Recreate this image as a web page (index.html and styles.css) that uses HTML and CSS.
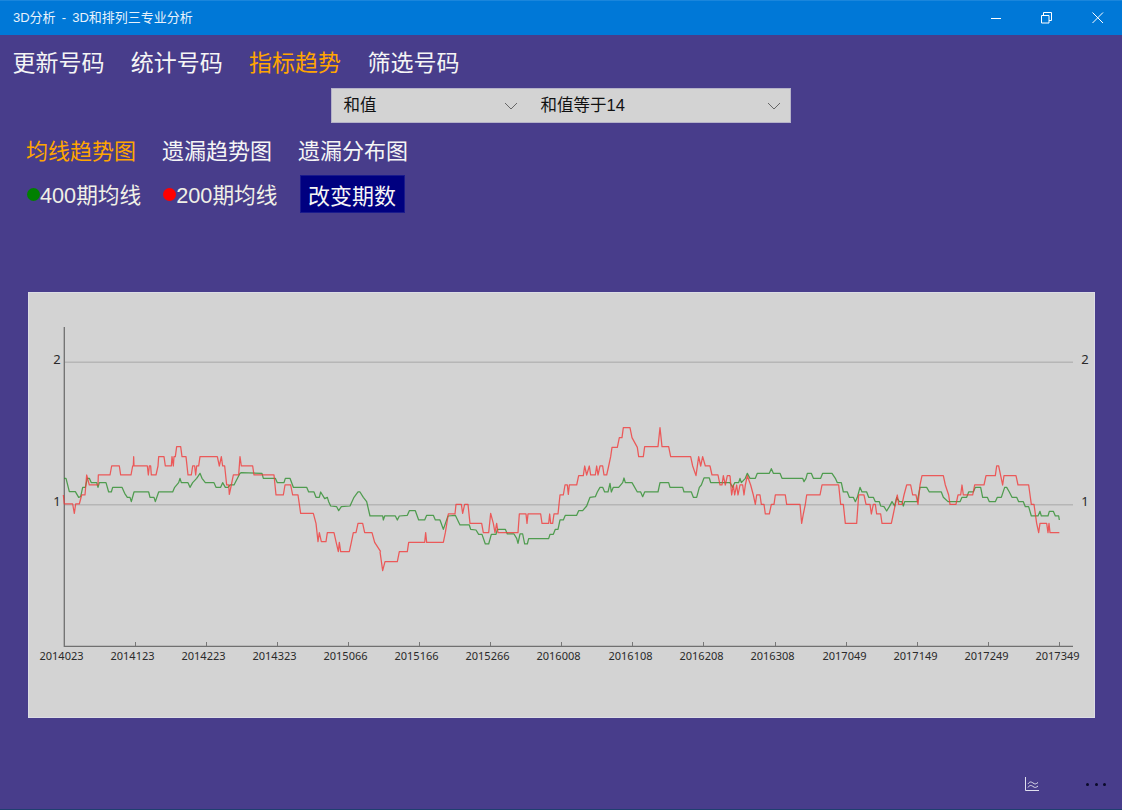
FILE: index.html
```html
<!DOCTYPE html>
<html lang="zh-CN">
<head>
<meta charset="utf-8">
<title>3D分析 - 3D和排列三专业分析</title>
<link rel="stylesheet" href="styles.css">
</head>
<body>
<div class="app">
  <header class="titlebar">
    <span class="title">3D分析 - 3D和排列三专业分析</span>
    <div class="winbtns">
      <svg class="winbtn" width="46" height="35" viewBox="0 0 46 35"><path d="M14 18.500h10" /></svg>
      <svg class="winbtn" width="46" height="35" viewBox="0 0 46 35"><path d="M15.500 15.500h7.500v7.500h-7.500zM17.500 15.500v-3h8v8h-2.500" /></svg>
      <svg class="winbtn" width="46" height="35" viewBox="0 0 46 35"><path d="M17.500 12.500l10.500 10.500M28 12.500l-10.500 10.500" /></svg>
    </div>
  </header>
  <nav class="nav">
    <span>更新号码</span><span>统计号码</span><span class="active">指标趋势</span><span>筛选号码</span>
  </nav>
  <div class="selects">
    <div class="select first"><span>和值</span>
      <svg class="chev" width="14" height="8" viewBox="0 0 14 8"><path d="M1 1l6 6 6-6" /></svg>
    </div>
    <div class="select second"><span>和值等于14</span>
      <svg class="chev" width="14" height="8" viewBox="0 0 14 8"><path d="M1 1l6 6 6-6" /></svg>
    </div>
  </div>
  <div class="subnav">
    <span class="active">均线趋势图</span><span>遗漏趋势图</span><span>遗漏分布图</span>
  </div>
  <div class="legend">
    <div class="legend-item"><i class="dot green"></i><span>400期均线</span></div>
    <div class="legend-item"><i class="dot red"></i><span>200期均线</span></div>
    <button class="change">改变期数</button>
  </div>
  <section class="panel">
    <svg class="chart" width="1067" height="426" viewBox="28 292 1067 426">
      <path class="grid" d="M64 362.300H1073M64 504.700H1073" />
      <path class="axis" d="M64.300 327V646.300H1073" />
      <path class="tick" d="M135.500 642v4M206.500 642v4M277.500 642v4M348.500 642v4M419.500 642v4M490.500 642v4M561.500 642v4M632.500 642v4M703.500 642v4M775.500 642v4M846.500 642v4M917.500 642v4M988.500 642v4M1059.500 642v4" />
      <g class="ylabels">
        <text x="57" y="364">2</text><text x="57" y="506">1</text>
        <text x="1085" y="364">2</text><text x="1085" y="506">1</text>
      </g>
      <g class="xlabels">
        <text x="61.500" y="659.500">2014023</text><text x="132.500" y="659.500">2014123</text><text x="203.500" y="659.500">2014223</text>
        <text x="274.500" y="659.500">2014323</text><text x="345.500" y="659.500">2015066</text><text x="416.500" y="659.500">2015166</text>
        <text x="487.500" y="659.500">2015266</text><text x="558.500" y="659.500">2016008</text><text x="630.500" y="659.500">2016108</text>
        <text x="701.500" y="659.500">2016208</text><text x="772.500" y="659.500">2016308</text><text x="844.500" y="659.500">2017049</text>
        <text x="915.500" y="659.500">2017149</text><text x="986.500" y="659.500">2017249</text><text x="1057.500" y="659.500">2017349</text>
      </g>
      <g transform="translate(30 410) scale(.33333)">
        <polyline class="lg" points="102,205 108,205 118,245 136,245 146,262 152,260 158,232 166,232 172,205 178,205 184,218 200,218 204,232 208,218 228,218 236,246 244,246 248,232 276,232 284,250 292,262 300,262 304,275 312,246 356,246 360,262 372,262 376,275 386,246 428,246 434,232 446,218 450,205 454,218 474,218 480,232 488,218 500,205 510,190 516,205 526,218 552,218 558,232 572,232 578,218 586,232 594,232 600,225 612,225 630,190 634,188 696,190 700,205 736,205 742,218 762,218 766,205 780,205 790,232 830,232 836,246 852,246 858,262 868,262 872,246 884,266 892,262 896,275 902,288 920,290 926,302 934,290 960,288 972,262 984,246 990,246 1000,262 1010,275 1020,318 1056,318" />
        <polyline class="lr" points="100,255 103,282 128,282 133,310 137,282 148,282 155,255 165,255 170,195 178,225 204,225 205,195 240,195 245,168 268,168 272,195 303,195 308,168 310,168 311,140 312,168 352,168 355,195 358,168 362,168 364,195 378,195 384,168 386,140 402,140 406,168 424,168 426,140 430,168 432,140 436,140 440,110 452,110 456,140 468,140 474,195 484,195 488,168 494,168 497,195 500,168 506,168 510,140 562,140 568,168 574,140 578,168 584,168 590,225 596,225 598,253 604,225 610,195 626,195 630,140 634,168 668,168 672,195 732,195 738,255 760,255 765,225 782,225 788,255 804,255 812,310 850,310 858,340 864,395 868,368 874,395 888,395 892,368 912,368 918,395 925,425 928,397 932,425 958,425 964,397 970,368 978,368 984,340 998,340 1004,368 1026,368 1034,397 1052,425" />
      </g>
      <g transform="translate(380 410) scale(.33333)">
        <polyline class="lg" points="6,318 8,318 10,330 14,318 46,318 52,330 58,318 82,316 88,302 106,302 116,330 134,330 140,316 160,316 166,330 180,330 190,358 204,318 226,316 240,345 268,345 272,358 288,360 296,373 306,373 316,402 326,402 334,373 348,373 352,358 376,358 382,372 402,372 410,385 414,400 420,372 428,372 434,402 442,402 446,386 506,386 510,373 520,373 526,358 534,358 540,330 550,330 556,316 590,316 596,302 608,302 620,288 630,262 646,260 652,246 660,232 668,232 674,246 684,246 690,220 694,246 700,232 716,232 728,218 732,204 736,218 756,218 772,246 782,246 788,260 794,246 834,246 840,218 866,218 870,232 908,232 912,246 934,246 940,262 950,262 958,232 964,225 972,204 988,204 992,218 1040,218 1050,218" />
        <polyline class="lr" points="0,425 8,482 15,455 52,455 58,425 82,425 86,397 134,397 137,368 140,397 190,397 196,368 205,312 225,312 228,283 244,283 248,310 254,283 264,283 270,340 305,340 310,368 326,368 332,310 340,340 345,368 350,340 354,368 414,368 418,312 438,312 441,340 444,312 482,312 486,340 506,340 509,312 512,340 518,340 522,312 534,312 540,255 550,255 555,225 562,225 565,253 568,225 590,225 596,197 610,197 614,168 620,195 628,168 632,195 646,195 650,168 654,195 660,168 668,168 672,195 680,195 686,168 692,140 696,112 712,112 718,83 726,83 730,53 750,53 756,83 772,112 776,140 790,140 794,110 834,110 840,53 846,110 866,110 872,140 932,140 938,168 948,197 956,140 962,168 968,140 976,168 990,168 996,195 1014,195 1020,225 1026,225 1030,197 1036,225 1042,197 1050,197" />
      </g>
      <g transform="translate(730 410) scale(.33333)">
        <polyline class="lg" points="0,218 8,232 14,218 26,218 30,205 34,218 46,205 52,190 60,205 76,205 82,190 118,190 124,176 130,190 150,190 156,205 218,205 222,215 228,205 232,190 244,190 250,205 272,205 278,190 306,190 316,205 322,218 334,218 340,246 352,246 358,262 370,262 376,275 382,262 390,232 396,246 410,246 416,262 430,262 436,275 448,275 452,288 462,290 470,303 478,290 486,275 494,288 500,262 508,275 516,275 520,288 524,275 562,275 570,232 590,232 598,246 634,246 640,262 654,275 690,275 696,262 710,262 716,246 730,246 736,232 752,232 758,262 772,262 778,275 796,275 802,262 814,262 824,232 830,232 838,246 846,262 860,262 866,275 880,275 886,290 896,290 904,318 924,318 930,304 934,318 954,318 958,304 970,304 976,318 986,318 988,330" />
        <polyline class="lr" points="0,197 5,255 10,225 14,255 20,225 24,255 30,225 38,225 42,255 46,225 52,197 62,225 70,255 76,283 80,255 90,255 94,283 102,283 106,312 118,312 124,283 132,283 136,255 166,255 170,283 210,283 215,340 220,312 226,283 230,255 270,255 276,225 326,225 332,283 340,283 346,340 380,340 386,255 402,255 408,283 420,283 424,312 430,283 436,283 440,312 452,312 456,340 484,340 490,312 496,283 502,255 506,283 516,283 522,255 530,225 542,225 548,255 558,255 564,283 570,225 576,197 640,197 646,225 656,255 660,283 678,283 684,255 692,255 696,225 700,255 728,255 734,225 762,225 768,197 796,197 800,168 806,168 812,197 818,225 822,197 858,197 864,225 896,225 904,283 912,283 920,340 926,368 930,340 950,340 954,368 957,340 960,368 988,368" />
      </g>
    </svg>
  </section>
  <footer class="appbar">
    <svg class="chart-icon" width="14" height="14" viewBox="0 0 14 14">
      <path d="M.5 0V13.500H14M3 7c1.500-2.500 3-2.500 5-1s3 1 5-.5M3 10.500c1.500-2.500 3-2.500 5-1s3 1 5-.5" />
    </svg>
    <div class="more"><i></i><i></i><i></i></div>
  </footer>
</div>
</body>
</html>
```
FILE: styles.css
```css
* { box-sizing: border-box; }
html, body { margin: 0; padding: 0; }
body {
  background: #483d8b;
  font-family: "Liberation Sans", "Noto Sans CJK SC", sans-serif;
  overflow: hidden;
}
.app {
  width: 1122px;
  height: 810px;
  display: flex;
  flex-direction: column;
  border-bottom: 1px solid #1f3f6f;
}
.titlebar {
  height: 35px;
  flex: none;
  background: #0078d7;
  border-top: 1px solid #1a86dc;
  display: flex;
  align-items: center;
  justify-content: space-between;
  color: #e8f2fb;
  padding-left: 13px;
}
.title { font-size: 13px; line-height: 16px; margin-top: -1px; word-spacing: 2.500px; }
.winbtns { display: flex; margin-top: -1px; margin-right: 1px; gap: 3px; }
.winbtn { fill: none; stroke: #fff; stroke-width: 1; display: block; }
.nav {
  display: flex;
  gap: 26.300px;
  padding: 12px 0 0 12.500px;
  height: 53px;
  flex: none;
  color: #f5f5f5;
  font-size: 23px;
  line-height: 33px;
}
.active { color: #ffa500; }
.selects {
  display: flex;
  justify-content: center;
  flex: none;
  height: 35px;
  padding-right: 1px;
}
.select {
  background: #d3d3d3;
  border: 1px solid #b5b2c8;
  height: 35px;
  display: flex;
  align-items: center;
  justify-content: space-between;
  font-size: 16.500px;
  color: #111;
}
.select span { margin-top: -4px; }
.select.first { width: 197px; border-right: 0; padding: 0 10px 0 12px; }
.select.second { width: 263px; border-left: 0; padding: 0 9px 0 13px; }
.chev { fill: none; stroke: #666; stroke-width: 1; display: block; }
.subnav {
  display: flex;
  gap: 26px;
  padding: 13px 0 0 26px;
  height: 52px;
  flex: none;
  color: #f5f5f5;
  font-size: 22px;
  line-height: 32px;
}
.legend {
  display: flex;
  align-items: center;
  padding-left: 27px;
  height: 38px;
  flex: none;
  color: #f0f0e6;
  font-size: 21.700px;
}
.legend-item { display: flex; align-items: center; margin-right: 22px; }
.legend-item span { margin-top: -2px; }
.dot { width: 13px; height: 13px; border-radius: 50%; display: block; margin-top: 1px; }
.dot.green { background: #008000; }
.dot.red { background: #ff0000; }
.change {
  background: #000080;
  border: 1px solid #1a1a8c;
  color: #f5f5f5;
  font: inherit;
  font-size: 22px;
  width: 105px;
  height: 38px;
  padding: 0;
}
.panel {
  margin: 79px 27px 0 28px;
  height: 426px;
  flex: none;
  background: #d3d3d3;
  border: 1px solid #dcdce4;
}
.chart { display: block; margin: -1px; }
.grid { fill: none; stroke: #b6b6b6; stroke-width: 1.400; }
.axis { fill: none; stroke: #707070; stroke-width: 1.300; }
.tick { fill: none; stroke: #777; stroke-width: 1; }
.ylabels text { font-size: 13px; fill: #2a2a2a; text-anchor: middle; font-family: "Noto Sans", sans-serif; }
.xlabels text { font-size: 11px; fill: #2a2a2a; text-anchor: middle; font-family: "Noto Sans", sans-serif; }
.lr, .lg { fill: none; stroke-width: 1.250; vector-effect: non-scaling-stroke; stroke-linejoin: round; }
.lr { stroke: #f23b3b; opacity: .8; }
.lg { stroke: #2f8f2f; opacity: .8; }
.appbar {
  flex: 1;
  display: flex;
  justify-content: flex-end;
  align-items: flex-start;
  padding: 59px 16px 0 0;
}
.chart-icon { fill: none; stroke: #e0e0ee; stroke-width: 1; display: block; margin-right: 47px; }
.more { display: flex; gap: 5.500px; padding-top: 6px; }
.more i { width: 3px; height: 3px; border-radius: 50%; background: #0a0a2a; display: block; }
```
